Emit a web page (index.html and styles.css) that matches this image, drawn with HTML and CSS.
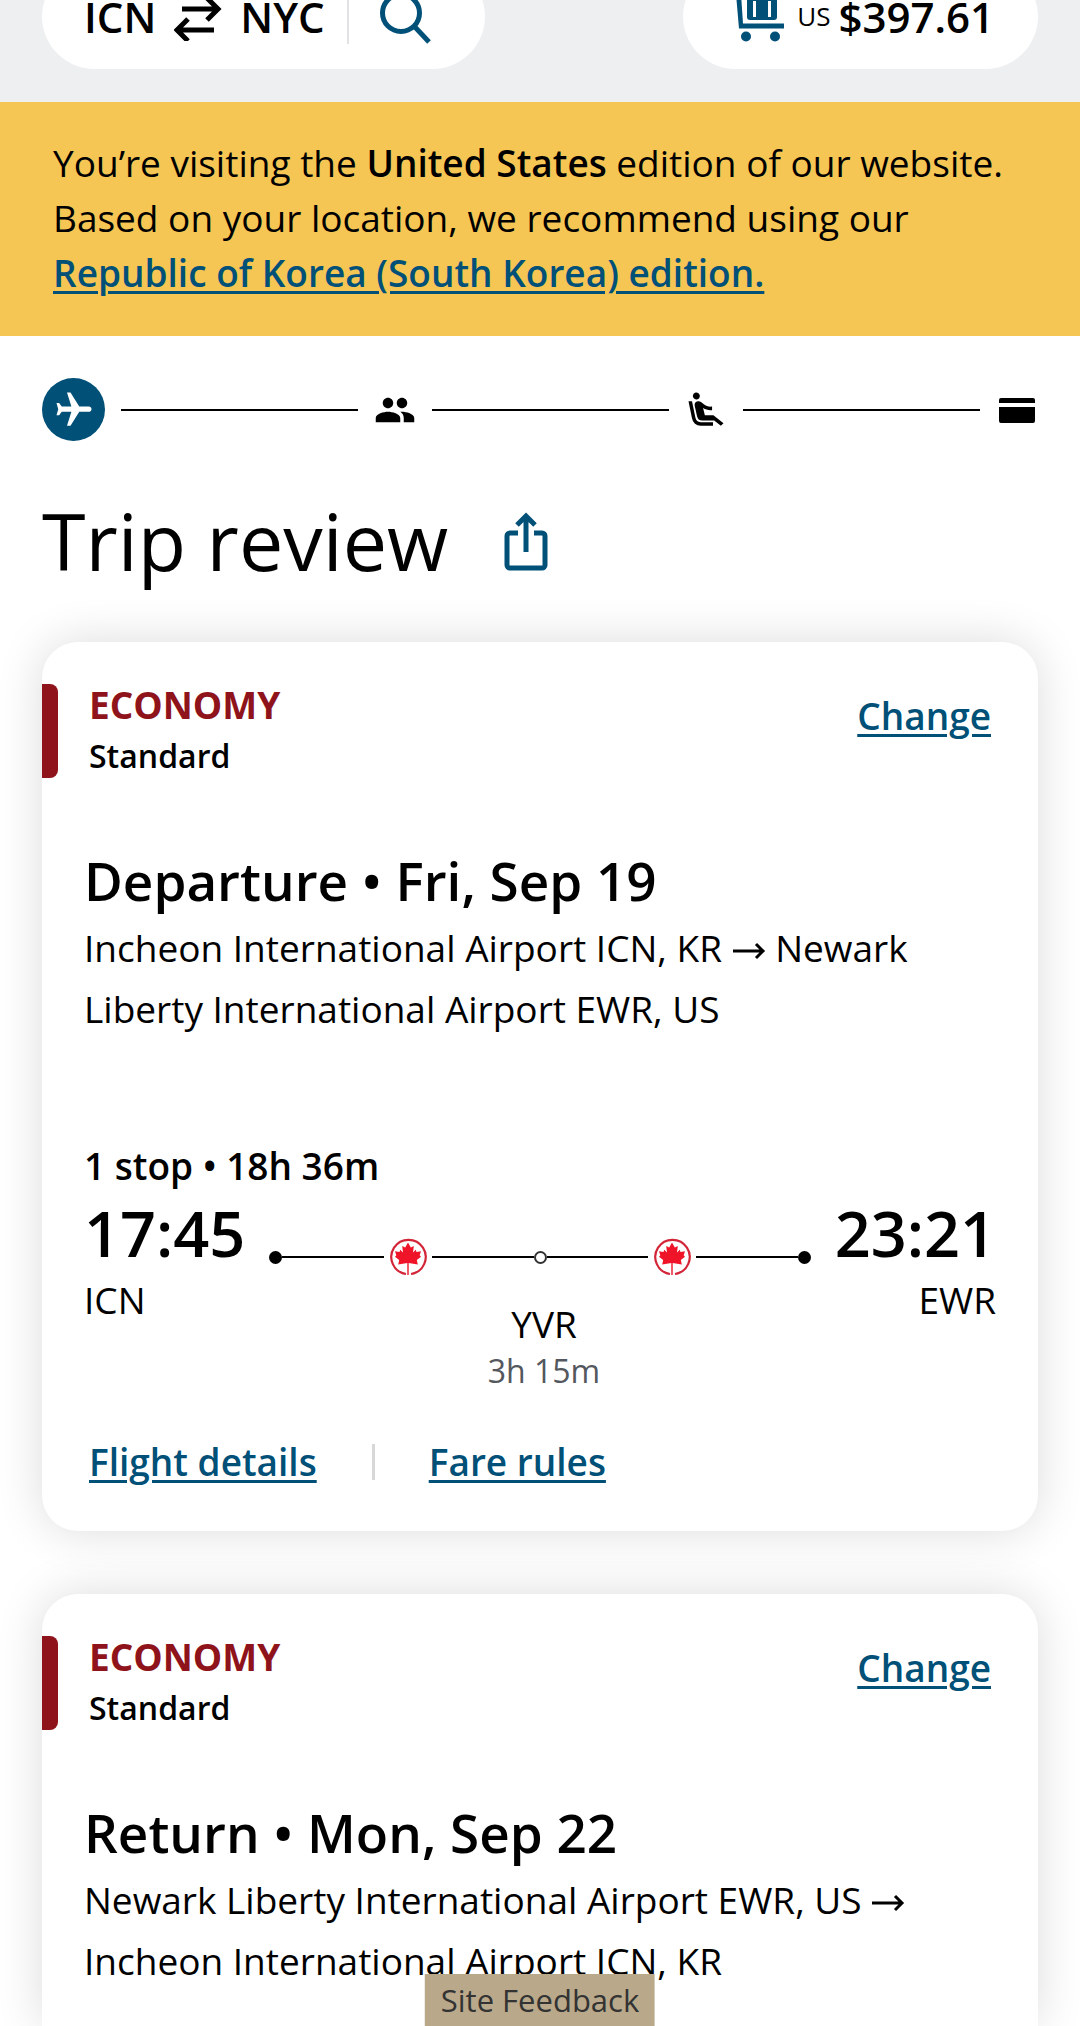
FILE: index.html
```html
<!DOCTYPE html>
<html lang="en">
<head>
    <meta charset="UTF-8">
    <meta name="viewport" content="width=device-width, initial-scale=1.0">
    <title>Trip review</title>
    <link rel="stylesheet" href="styles.css">
</head>
<body>
    <!-- shared icons -->
    <svg class="sprite" aria-hidden="true">
        <symbol id="leaf" viewBox="0 0 38 38">
            <path d="M17 36A17.200 17.200 0 1 1 22 36" fill="none" stroke="#d22638" stroke-width="2.200"/>
            <path d="M19 4.500L21.800 9.500 24.800 8 24 14.500 26.800 11.800 27.500 14 32 13.200 30.700 17.200 32 18.800 27.800 22 28.800 26.500 19.700 25V37H18.300V25L9.200 26.500 10.200 22 6 18.800 7.300 17.200 6 13.200 10.500 14 11.200 11.800 14 14.500 13.200 8 16.200 9.500z" fill="#f01428"/>
        </symbol>
    </svg>

    <header class="topbar">
        <div class="pill">
            <button class="pill-btn route">
                <span>ICN</span>
                <svg width="48" height="48" viewBox="0 0 48 48" fill="none" stroke="#000" stroke-width="5" aria-hidden="true">
                    <path d="M8 16h36M33 5l11 11-11 11M40 37H4M14 26L3 37l11 11"/>
                </svg>
                <span>NYC</span>
            </button>
            <button class="pill-btn search" aria-label="Search">
                <svg width="54" height="54" viewBox="0 0 54 54" fill="none" stroke="#005078" stroke-width="5" aria-hidden="true">
                    <circle cx="22" cy="23" r="18.500"/>
                    <path d="M35 36l15 16"/>
                </svg>
            </button>
        </div>
        <button class="pill pill-btn cart">
            <svg width="48" height="56" viewBox="0 0 48 56" fill="#005078" aria-hidden="true">
                <path d="M0 5h5l2 29.500h41v5H3z"/>
                <path d="M14 9h24a3 3 0 0 1 3 3v16a3 3 0 0 1-3 3H14a3 3 0 0 1-3-3V12a3 3 0 0 1 3-3z"/>
                <path d="M17 12h3v16h-3zM32 12h3v16h-3z" fill="#fff"/>
                <circle cx="10" cy="47.500" r="5"/>
                <circle cx="39" cy="47.500" r="5"/>
            </svg>
            <span class="currency">US</span>
            <span>$397.61</span>
        </button>
    </header>

    <div class="notice">
        <p>You’re visiting the <strong>United States</strong> edition of our website. Based on your location, we recommend using our <a href="#">Republic of Korea (South Korea) edition.</a></p>
    </div>

    <main>
        <div class="steps">
            <span class="step-active">
                <svg width="42" height="42" viewBox="0 0 24 24" fill="#fff" aria-hidden="true">
                    <path transform="rotate(90 12 12)" d="M21 16v-2l-8-5V3.500c0-.83-.67-1.500-1.500-1.500S10 2.670 10 3.500V9l-8 5v2l8-2.500V19l-2 1.500V22l3.500-1 3.500 1v-1.500L13 19v-5.500l8 2.500z"/>
                </svg>
            </span>
            <span class="step-line"></span>
            <svg width="42" height="42" viewBox="0 0 24 24" aria-hidden="true">
                <path d="M16 11c1.660 0 2.990-1.340 2.990-3S17.660 5 16 5s-3 1.340-3 3 1.340 3 3 3zm-8 0c1.660 0 2.990-1.340 2.990-3S9.660 5 8 5 5 6.340 5 8s1.340 3 3 3zm0 2c-2.330 0-7 1.170-7 3.500V19h14v-2.500c0-2.330-4.670-3.500-7-3.500zm8 0c-.29 0-.62.020-.97.050 1.160.84 1.970 1.970 1.970 3.450V19h6v-2.500c0-2.330-4.670-3.500-7-3.500z"/>
            </svg>
            <span class="step-line"></span>
            <svg width="42" height="42" viewBox="0 0 24 24" aria-hidden="true">
                <path d="M5.350 5.640c-.9-.64-1.120-1.880-.49-2.790.63-.9 1.880-1.120 2.790-.49.9.64 1.120 1.880.49 2.790-.64.9-1.880 1.120-2.790.49zM16 19H8.930c-1.480 0-2.740-1.080-2.960-2.540L4 7H2l1.990 9.760A5.010 5.010 0 0 0 8.940 21H16v-2zm.23-4h-4.880l-1.030-4.100c1.580.89 3.280 1.540 5.150 1.220V9.990c-1.630.31-3.440-.27-4.690-1.250L9.140 7.470c-.23-.18-.49-.3-.76-.38a2.210 2.210 0 0 0-.99-.06h-.02a2.268 2.268 0 0 0-1.840 2.610l1.350 5.920A3.008 3.008 0 0 0 9.830 18h6.850l3.820 3 1.500-1.500-5.770-4.500z"/>
            </svg>
            <span class="step-line"></span>
            <svg width="42" height="42" viewBox="0 0 42 42" aria-hidden="true">
                <path d="M5 9h32a2 2 0 0 1 2 2v3H3v-3a2 2 0 0 1 2-2zM3 18h36v14a2 2 0 0 1-2 2H5a2 2 0 0 1-2-2z"/>
            </svg>
        </div>

        <div class="title">
            <h1>Trip review</h1>
            <button class="share" aria-label="Share">
                <svg width="44" height="60" viewBox="0 0 44 60" fill="none" stroke="#005078" stroke-width="5" aria-hidden="true">
                    <path d="M14 22H6a3 3 0 0 0-3 3v29a3 3 0 0 0 3 3h32a3 3 0 0 0 3-3V25a3 3 0 0 0-3-3h-8"/>
                    <path d="M22 41V5M13 14l9-9 9 9"/>
                </svg>
            </button>
        </div>

        <section class="card">
            <div class="card-head">
                <div class="fare">
                    <span class="cabin">ECONOMY</span>
                    <span class="brand">Standard</span>
                </div>
                <a href="#">Change</a>
            </div>
            <h2>Departure • Fri, Sep 19</h2>
            <p class="airports">Incheon International Airport ICN, KR <svg class="arrow" viewBox="0 0 34 24" aria-hidden="true"><path d="M1 13h30M24 6l7 7-7 7"/></svg> Newark Liberty International Airport EWR, US</p>

            <p class="summary">1 stop • 18h 36m</p>
            <div class="flight">
                <div class="end">
                    <span class="time">17:45</span>
                    <span>ICN</span>
                </div>
                <div class="path">
                    <div class="track">
                        <i class="dot"></i>
                        <i class="leg"></i>
                        <svg class="logo"><use href="#leaf"/></svg>
                        <i class="leg"></i>
                        <i class="dot stop"></i>
                        <i class="leg"></i>
                        <svg class="logo"><use href="#leaf"/></svg>
                        <i class="leg"></i>
                        <i class="dot"></i>
                    </div>
                    <div class="layover">
                        <span>YVR</span>
                        <span class="wait">3h 15m</span>
                    </div>
                </div>
                <div class="end arrive">
                    <span class="time">23:21</span>
                    <span>EWR</span>
                </div>
            </div>
            <div class="links">
                <a href="#">Flight details</a>
                <a href="#">Fare rules</a>
            </div>
        </section>

        <section class="card">
            <div class="card-head">
                <div class="fare">
                    <span class="cabin">ECONOMY</span>
                    <span class="brand">Standard</span>
                </div>
                <a href="#">Change</a>
            </div>
            <h2>Return • Mon, Sep 22</h2>
            <p class="airports">Newark Liberty International Airport EWR, US <svg class="arrow" viewBox="0 0 34 24" aria-hidden="true"><path d="M1 13h30M24 6l7 7-7 7"/></svg> Incheon International Airport ICN, KR</p>
        </section>
    </main>

    <button class="feedback">Site Feedback</button>
</body>
</html>
```
FILE: styles.css
```css
* {
    box-sizing: border-box;
}

body {
    display: flex;
    flex-direction: column;
    min-height: 100vh;
    margin: 0;
    background-color: #fff;
    color: #000;
    font-family: "Open Sans", sans-serif;
    font-size: 37px;
    line-height: 55px;
}

h1, h2, p {
    margin: 0;
}

button {
    border: none;
    padding: 0;
    background: none;
    color: inherit;
    font: inherit;
    cursor: pointer;
}

a {
    color: #005078;
    font-weight: 600;
    text-decoration-thickness: 3px;
    text-underline-offset: 4px;
}

svg {
    display: block;
    flex: none;
}

.sprite {
    display: none;
}

/* top bar, partly scrolled out of view */
.topbar {
    display: flex;
    justify-content: space-between;
    margin-top: -36px;
    padding: 0 42px 33px;
    background-color: #eeeff1;
}

.pill {
    display: flex;
    align-items: center;
    height: 105px;
    border-radius: 53px;
    background-color: #fff;
    font-size: 42px;
    font-weight: 600;
}

.pill-btn {
    display: flex;
    align-items: center;
}

.route {
    gap: 18px;
    padding: 0 22px 0 42px;
    border-right: 2px solid #e1e2e4;
}

.search {
    padding: 0 52px 0 30px;
}

.cart {
    gap: 8px;
    padding: 0 44px 0 53px;
}

.currency {
    padding-left: 5px;
    font-size: 26px;
    font-weight: 400;
}

.notice {
    padding: 33px 53px 36px;
    background-color: #f5c654;
}

.notice strong {
    font-weight: 600;
}

main {
    display: flex;
    flex: 1;
    flex-direction: column;
    padding: 42px 42px 0;
}

.steps {
    display: flex;
    align-items: center;
    gap: 16px;
}

.step-active {
    display: grid;
    place-items: center;
    width: 63px;
    height: 63px;
    border-radius: 50%;
    background-color: #005078;
}

.step-line {
    flex: 1;
    height: 2px;
    background-color: #000;
}

.title {
    display: flex;
    align-items: center;
    gap: 56px;
    margin: 46px 0 47px;
}

h1 {
    font-size: 79px;
    font-weight: 400;
    line-height: 108px;
}

.card {
    margin-bottom: 63px;
    padding: 42px;
    border-radius: 36px;
    background-color: #fff;
    box-shadow: 0 0 48px rgba(0, 0, 0, 0.14);
}

/* the last card runs on to the bottom of the window */
.card:last-child {
    flex: 1;
    margin-bottom: 0;
    padding-bottom: 0;
    border-radius: 36px 36px 0 0;
}

.card-head {
    display: flex;
    justify-content: space-between;
    align-items: flex-start;
    margin-left: -42px;
    padding-right: 5px;
}

.card-head a {
    margin-top: 4px;
}

.fare {
    display: grid;
    grid-template-columns: 16px auto;
    gap: 8px 31px;
}

.fare::before {
    content: "";
    grid-row: span 2;
    border-radius: 0 8px 8px 0;
    background-color: #8f131a;
}

.cabin {
    color: #8f131a;
    font-weight: 700;
    line-height: 42px;
}

.brand {
    font-size: 32px;
    font-weight: 600;
    line-height: 44px;
}

h2 {
    margin-top: 67px;
    font-size: 53px;
    font-weight: 600;
    line-height: 72px;
}

.airports {
    line-height: 61px;
}

.arrow {
    display: inline-block;
    width: 34px;
    height: 24px;
    fill: none;
    stroke: #000;
    stroke-width: 3;
}

.summary {
    margin-top: 99px;
    font-weight: 600;
}

.flight {
    display: flex;
    gap: 24px;
}

.end {
    display: flex;
    flex-direction: column;
}

.arrive {
    align-items: flex-end;
}

.time {
    font-size: 63px;
    font-weight: 600;
    line-height: 79px;
}

.path {
    flex: 1;
    padding-top: 45px;
}

.track {
    display: flex;
    align-items: center;
    margin-bottom: 24px;
}

.dot {
    width: 13px;
    height: 13px;
    border-radius: 50%;
    background-color: #000;
}

.stop {
    border: 2px solid #333;
    background-color: #fff;
}

.leg {
    flex: 1;
    height: 2px;
    background-color: #000;
}

.logo {
    width: 38px;
    height: 38px;
    margin: 0 5px;
}

.layover {
    display: flex;
    flex-direction: column;
    align-items: center;
    padding-left: 8px;
    line-height: 47px;
}

.wait {
    color: #54585e;
    font-size: 32px;
}

.links {
    display: flex;
    align-items: center;
    gap: 55px;
    margin: 40px 5px 0;
}

.links a + a {
    padding-left: 57px;
    background: linear-gradient(#d8d8d8, #d8d8d8) left / 3px 36px no-repeat;
}

.feedback {
    position: fixed;
    bottom: 0;
    left: 50%;
    padding: 0 16px;
    transform: translateX(-50%);
    background-color: #b9a88a;
    color: #333;
    font-size: 31px;
    line-height: 52px;
}
```
